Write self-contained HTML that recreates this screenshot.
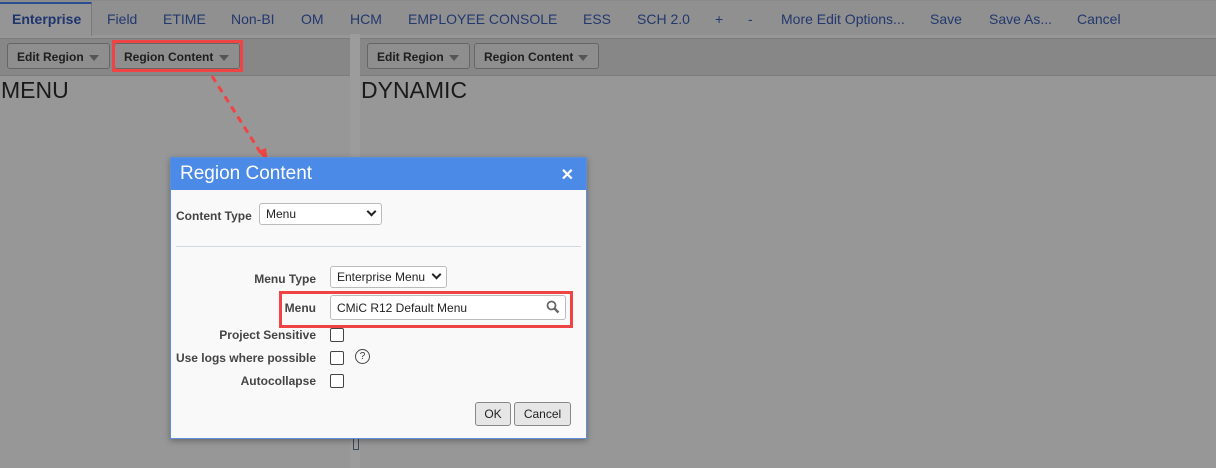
<!DOCTYPE html>
<html><head><style>
body{margin:0;width:1216px;height:468px;overflow:hidden;background:#979797;font-family:"Liberation Sans",Arial,sans-serif;position:relative}
.tabs{position:absolute;left:0;top:0;width:1216px;height:34px;background:#909090;border-top:1px solid #8a8a8a}
.tab{position:absolute;top:10px;font-size:14px;color:#22386e}
.ent{position:absolute;left:0;top:1px;width:79px;height:32px;background:#959595;border-top:2px solid #2a4d8f;border-right:1px solid #7a7a7a;font-weight:bold;color:#1f3570;font-size:14px;padding-left:12px;line-height:30px}
.bar{position:absolute;top:38px;height:36px;background:#878787;border-top:1px solid #7c7c7c;border-bottom:1px solid #7c7c7c}
.btn{position:absolute;top:43px;height:26px;border:1px solid #666;border-radius:3px;background:#8e8e8e;font-size:12px;font-weight:bold;color:#1e1e1e;line-height:26px;padding-left:9px;box-sizing:border-box}
.btn:after{content:"";position:absolute;right:10px;top:11px;border:5px solid transparent;border-top:6px solid #555}
.big{position:absolute;top:77px;font-size:23px;color:#1a1a1a}
.dlg{position:absolute;left:170px;top:157px;width:417px;height:282px;background:#f9f9f9;border:1px solid #5b8fd8;box-sizing:border-box;box-shadow:0 2px 6px rgba(0,0,0,.3)}
.ttl{height:32px;background:#4c8ae8;color:#fff;font-size:19px;line-height:32px;padding-left:9px}
.x{position:absolute;right:12px;top:7px;color:#fff;font-size:16px;font-weight:bold}
.lbl{position:absolute;font-size:12px;font-weight:bold;color:#444;text-align:right}
.sel{position:absolute;height:22px;border:1px solid #bbb;border-radius:3px;background:#fff;font-size:12px;line-height:21px;padding-left:6px;box-sizing:border-box;color:#222}
.sel i{position:absolute;right:6px;width:5px;height:5px;border-right:2px solid #222;border-bottom:2px solid #222;transform:rotate(45deg);top:4px}
.cb{position:absolute;left:159px;width:12px;height:12px;border:1px solid #444;border-radius:2px;background:#fff}
.pb{position:absolute;top:244px;height:24px;border:1px solid #888;border-radius:3px;background:#e6e6e6;font-size:12px;line-height:22px;text-align:center;box-sizing:border-box;color:#222}
.red{position:absolute;border:3px solid #f04444;box-sizing:border-box}
</style></head><body>
<div class="tabs">
<div class="ent">Enterprise</div>
<span class="tab" style="left:107px">Field</span>
<span class="tab" style="left:163px">ETIME</span>
<span class="tab" style="left:231px">Non-BI</span>
<span class="tab" style="left:301px">OM</span>
<span class="tab" style="left:350px">HCM</span>
<span class="tab" style="left:408px">EMPLOYEE CONSOLE</span>
<span class="tab" style="left:583px">ESS</span>
<span class="tab" style="left:637px">SCH 2.0</span>
<span class="tab" style="left:715px">+</span>
<span class="tab" style="left:748px">-</span>
<span class="tab" style="left:781px">More Edit Options...</span>
<span class="tab" style="left:930px">Save</span>
<span class="tab" style="left:989px">Save As...</span>
<span class="tab" style="left:1077px">Cancel</span>
</div>
<div style="position:absolute;left:350px;top:34px;width:10px;height:434px;background:#9c9c9c"></div>
<div class="bar" style="left:0;width:350px"></div>
<div class="bar" style="left:360px;width:856px"></div>
<div class="btn" style="left:7px;width:103px">Edit Region</div>
<div class="btn" style="left:114px;width:126px">Region Content</div>
<div class="red" style="left:112px;top:40px;width:131px;height:32px"></div>
<div class="btn" style="left:367px;width:103px">Edit Region</div>
<div class="btn" style="left:474px;width:125px">Region Content</div>
<div class="big" style="left:1px">MENU</div>
<div class="big" style="left:361px">DYNAMIC</div>
<svg style="position:absolute;left:0;top:0" width="1216" height="468"><line x1="212" y1="76" x2="262" y2="155" stroke="#f04444" stroke-width="3" stroke-dasharray="7,5"/><polygon points="258,151 268,163 266,148" fill="#f04444"/></svg>
<div style="position:absolute;left:353px;top:437px;width:6px;height:13px;border:1px solid #3a4a5a;box-sizing:border-box"></div>
<div class="dlg">
<div class="ttl">Region Content</div><div class="x">✕</div>
<div class="lbl" style="left:5px;top:51px">Content Type</div>
<div class="sel" style="left:88px;top:45px;width:123px">Menu<i></i></div>
<div style="position:absolute;left:5px;right:5px;top:88px;border-top:1px solid #cfd8e3"></div>
<div class="lbl" style="left:0;width:145px;top:114px">Menu Type</div>
<div class="sel" style="left:159px;top:108px;width:117px">Enterprise Menu<i></i></div>
<div class="lbl" style="left:0;width:145px;top:143px">Menu</div>
<div class="sel" style="left:159px;top:137px;width:236px;height:25px;line-height:24px">CMiC R12 Default Menu
<svg style="position:absolute;right:5px;top:4px" width="14" height="14"><circle cx="5.5" cy="5.5" r="4" fill="none" stroke="#666" stroke-width="1.8"/><line x1="8.5" y1="8.5" x2="12.5" y2="12.5" stroke="#666" stroke-width="2.4"/></svg></div>
<div class="red" style="left:108px;top:133px;width:294px;height:37px"></div>
<div class="lbl" style="left:0;width:145px;top:170px">Project Sensitive</div>
<div class="cb" style="top:170px"></div>
<div class="lbl" style="left:0;width:145px;top:193px">Use logs where possible</div>
<div class="cb" style="top:193px"></div>
<div style="position:absolute;left:184px;top:191px;width:13px;height:13px;border:1px solid #444;border-radius:50%;font-size:10px;line-height:13px;text-align:center;color:#333">?</div>
<div class="lbl" style="left:0;width:145px;top:216px">Autocollapse</div>
<div class="cb" style="top:216px"></div>
<div class="pb" style="left:304px;width:36px">OK</div>
<div class="pb" style="left:343px;width:57px">Cancel</div>
</div>
</body></html>
